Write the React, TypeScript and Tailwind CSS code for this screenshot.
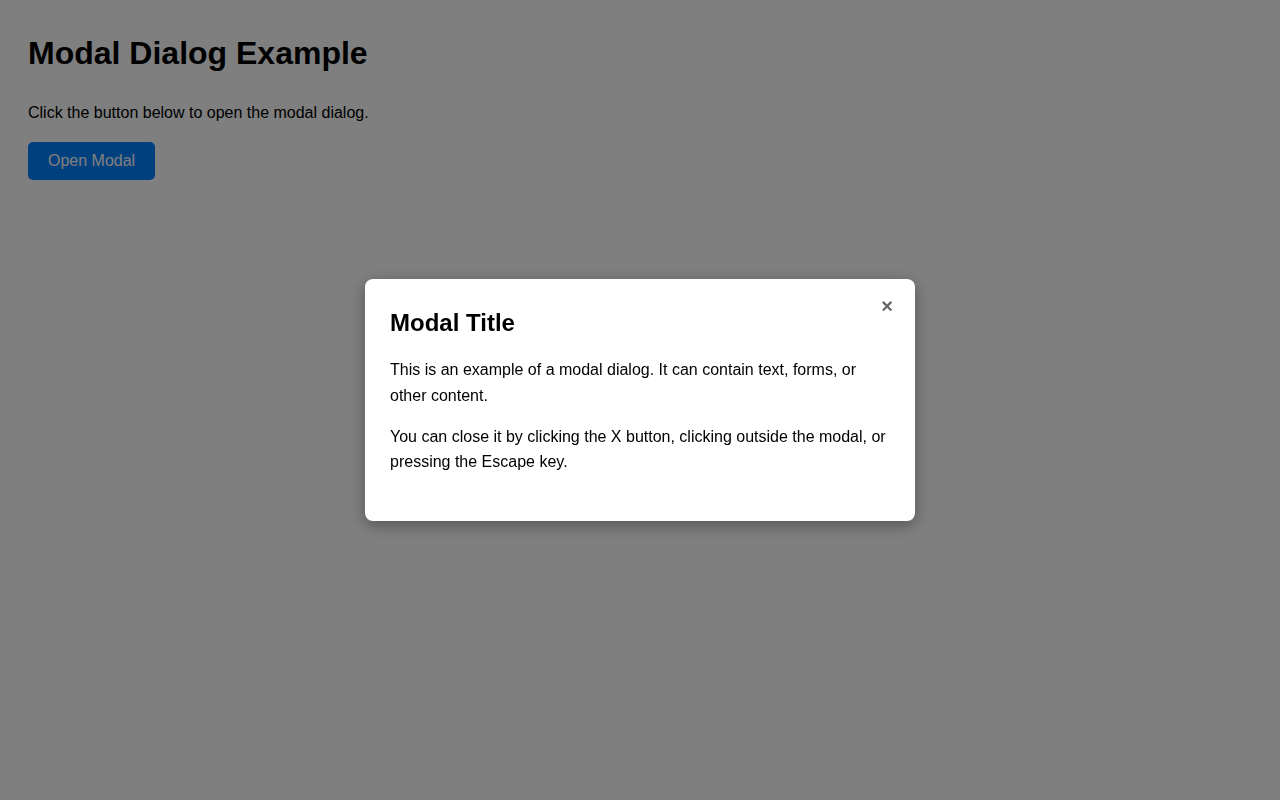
import { useEffect, useState } from "react";

export default function App() {
  const [open, setOpen] = useState(true);

  useEffect(() => {
    const onKey = (e: KeyboardEvent) => {
      if (e.key === "Escape") setOpen(false);
    };
    window.addEventListener("keydown", onKey);
    return () => window.removeEventListener("keydown", onKey);
  }, []);

  return (
    <div className="min-h-screen bg-white p-[28px] text-black font-['Liberation_Sans',Arial,Helvetica,sans-serif]">
      <h1 className="mt-[7px] text-[32px] font-bold leading-[37px]">Modal Dialog Example</h1>
      <p className="mt-[32px] text-[16px] leading-[18px]">Click the button below to open the modal dialog.</p>
      <button
        onClick={() => setOpen(true)}
        className="mt-[20px] rounded-[5px] bg-[#0080ff] px-[20px] py-[10px] text-[16px] leading-[18px] text-white"
      >
        Open Modal
      </button>

      {open && (
        <div
          onClick={() => setOpen(false)}
          className="fixed inset-0 flex items-center justify-center bg-black/50"
        >
          <div
            onClick={(e) => e.stopPropagation()}
            className="relative w-[550px] rounded-[8px] bg-white px-[25px] pt-[30px] pb-[46px] shadow-[0_4px_16px_rgba(0,0,0,0.35)]"
          >
            <button
              onClick={() => setOpen(false)}
              className="absolute top-[17px] right-[22px] text-[20px] leading-none font-bold text-[#666]"
            >
              ×
            </button>
            <h2 className="text-[24px] font-bold leading-[28px]">Modal Title</h2>
            <p className="mt-[20px] text-[16px] leading-[1.6]">
              This is an example of a modal dialog. It can contain text, forms, or other content.
            </p>
            <p className="mt-[15px] text-[16px] leading-[1.6]">
              You can close it by clicking the X button, clicking outside the modal, or pressing the Escape key.
            </p>
          </div>
        </div>
      )}
    </div>
  );
}
